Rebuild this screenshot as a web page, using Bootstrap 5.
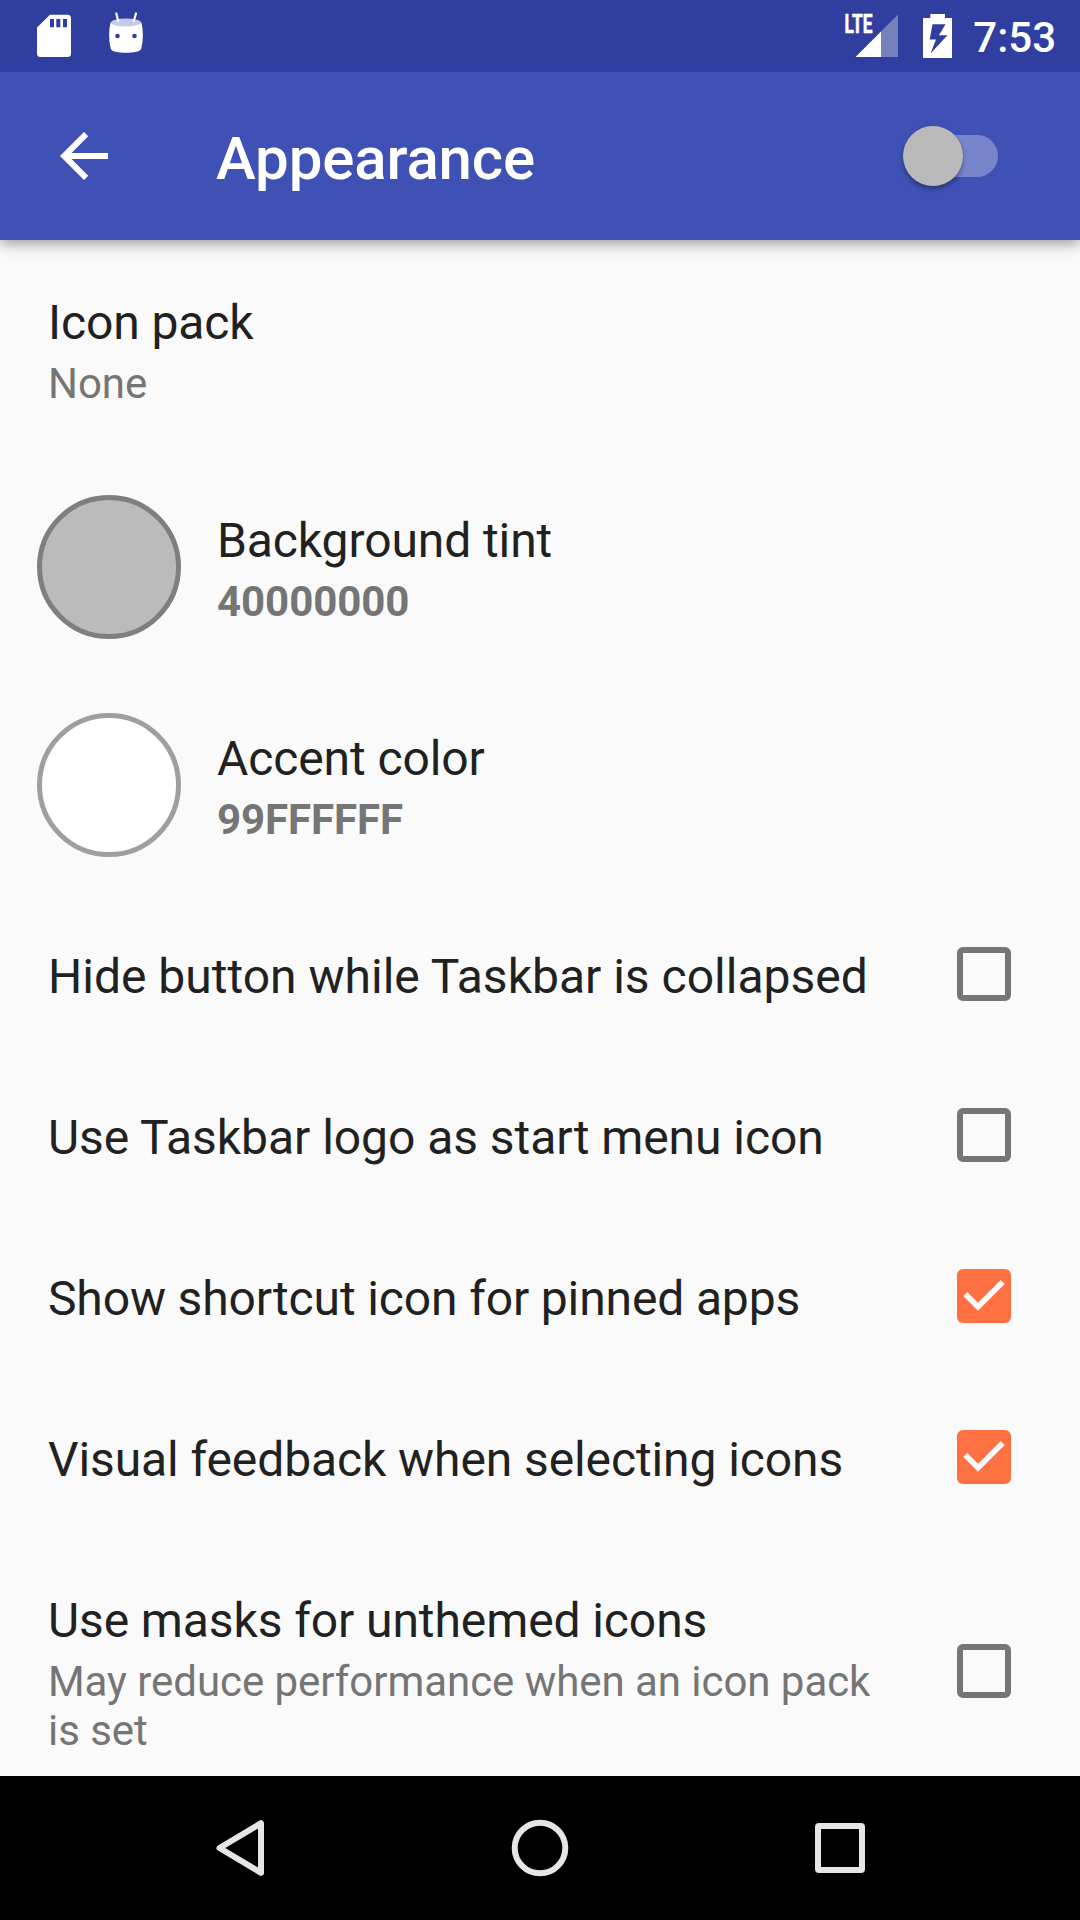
<!DOCTYPE html>
<html lang="en">
<head>
<meta charset="utf-8">
<meta name="viewport" content="width=device-width, initial-scale=1">
<title>Appearance</title>
<link href="https://cdn.jsdelivr.net/npm/bootstrap@5.3.0/dist/css/bootstrap.min.css" rel="stylesheet">
<style>
  body { font-family: Roboto, sans-serif; background: #fafafa; color: #212121; }
  .screen { width: 1080px; height: 1920px; }
  .status-bar { height: 72px; background: #303f9f; padding: 0 24px 0 37px; }
  .robot { margin-left: 38px; }
  .battery { margin-left: 25px; }
  .clock { font-size: 42px; line-height: 72px; font-weight: 500; padding-top: 3px; margin-left: 21px; }
  .app-bar { height: 168px; background: #3f51b5; padding: 0 82px 0 60px; box-shadow: 0 3px 14px rgba(0,0,0,.42); clip-path: inset(0 0 -30px 0); z-index: 2; }
  .app-title { font-size: 60px; line-height: 70px; font-weight: 500; margin: 6px 0 0 108px; letter-spacing: -.16px; }
  .toggle { width: 96px; height: 60px; }
  .toggle-track { width: 66px; height: 42px; border-radius: 0 21px 21px 0; background: #7985cb; }
  .toggle-thumb { width: 60px; height: 60px; background: #b9b9b9; left: .5px; top: 0; box-shadow: 0 3px 5px rgba(0,0,0,.35); }
  .pref { padding: 50px 69px 46px 48px; }
  .pref-tint { padding-left: 37px; height: 218px; }
  .pref-title { font-size: 48px; line-height: 65px; letter-spacing: -.1px; }
  .pref-sub { font-size: 42px; line-height: 49px; color: #757575; margin: 4px 0 4px; letter-spacing: -.05px; }
  .tight-0 { letter-spacing: 0; }
  .tight-1 { letter-spacing: -.05px; }
  .tight-2 { letter-spacing: -.14px; }
  .swatch { width: 144px; height: 144px; border: 5px solid; margin: -17px 36px -13px 0; }
  .swatch-grey { background: #bbb; border-color: #7f7f7f; }
  .swatch-white { background: #fff; border-color: #9f9f9f; }
  .box { margin-top: -5px; }
  .nav-keys { height: 144px; background: #000; }
</style>
</head>
<body>
<div class="screen d-flex flex-column overflow-hidden">
  <header class="status-bar d-flex align-items-center text-white flex-shrink-0">
    <svg width="34" height="72" viewBox="37 0 34 72"><path fill="#fff" fill-rule="evenodd" d="M50 14.700H67.500Q71 14.700 71 18.200V53.500Q71 57 67.500 57H40.500Q37 57 37 53.500V27.500ZM50 19V27.300H54V19ZM56.300 19V27.300H60.300V19ZM63 19V27.300H67V19Z"/></svg>
    <svg class="robot me-auto" width="34" height="72" viewBox="109 0 34 72"><path fill="#fff" d="M110.700 22C112 26.500 140 26.500 141.300 22Q144.500 34 141.300 48.500C140.500 54.300 111.500 54.300 110.700 48.500Q107.500 34 110.700 22Z"/><ellipse cx="126" cy="22.500" rx="15" ry="4" fill="#c5cae9"/><path d="M116.300 13.500 118.200 21M136 13.500 133.800 21" stroke="#fff" stroke-width="2.200" stroke-linecap="round"/><circle cx="117.500" cy="36" r="2.300" fill="#303f9f"/><circle cx="134.500" cy="36" r="2.300" fill="#303f9f"/></svg>
    <svg width="54" height="72" viewBox="844 0 54 72"><path fill="#7580bf" d="M881 31.500 898 14.500V57H881Z"/><path fill="#fff" d="M855.500 57 881 31.500V57Z"/><text x="844.500" y="33.300" textLength="28" lengthAdjust="spacingAndGlyphs" font-size="26" font-weight="700" fill="#fff" stroke="#fff" stroke-width=".6">LTE</text></svg>
    <svg class="battery" width="29" height="72" viewBox="923 0 29 72"><path fill="#fff" fill-rule="evenodd" d="M930.300 14H945V18H952V58H923V18H930.300ZM932.500 24.300 929.700 39.500H936L930.500 53.500 947.500 35.300H939L945.500 24.300Z"/></svg>
    <span class="clock">7:53</span>
  </header>

  <nav class="app-bar d-flex align-items-center text-white flex-shrink-0 position-relative">
    <svg width="48" height="48" viewBox="0 0 48 48"><path fill="#fff" d="M48 21H11.500L28.200 4.200 24 0 0 24 24 48 28.200 43.800 11.500 27H48Z"/></svg>
    <h1 class="app-title me-auto">Appearance</h1>
    <div class="toggle d-flex align-items-center justify-content-end position-relative">
      <div class="toggle-track"></div>
      <div class="toggle-thumb rounded-circle position-absolute"></div>
    </div>
  </nav>

  <main class="flex-grow-1 overflow-hidden">
    <section class="pref">
      <div class="pref-title">Icon pack</div>
      <div class="pref-sub">None</div>
    </section>
    <section class="pref pref-tint d-flex align-items-center">
      <div class="swatch swatch-grey rounded-circle"></div>
      <div>
        <div class="pref-title">Background tint</div>
        <div class="pref-sub fw-bold">40000000</div>
      </div>
    </section>
    <section class="pref pref-tint d-flex align-items-center">
      <div class="swatch swatch-white rounded-circle"></div>
      <div>
        <div class="pref-title">Accent color</div>
        <div class="pref-sub fw-bold">99FFFFFF</div>
      </div>
    </section>
    <section class="pref d-flex align-items-center justify-content-between">
      <div class="pref-title tight-0">Hide button while Taskbar is collapsed</div>
      <svg class="box" width="54" height="54"><rect x="3" y="3" width="48" height="48" rx="3" fill="none" stroke="#757575" stroke-width="6"/></svg>
    </section>
    <section class="pref d-flex align-items-center justify-content-between">
      <div class="pref-title tight-1">Use Taskbar logo as start menu icon</div>
      <svg class="box" width="54" height="54"><rect x="3" y="3" width="48" height="48" rx="3" fill="none" stroke="#757575" stroke-width="6"/></svg>
    </section>
    <section class="pref d-flex align-items-center justify-content-between">
      <div class="pref-title tight-2">Show shortcut icon for pinned apps</div>
      <svg class="box" width="54" height="54"><rect width="54" height="54" rx="6" fill="#ff7043"/><path fill="#fafafa" d="M6.300 27 10.200 23 21 33.700 43.700 11 47.700 15 21 41.800Z"/></svg>
    </section>
    <section class="pref d-flex align-items-center justify-content-between">
      <div class="pref-title">Visual feedback when selecting icons</div>
      <svg class="box" width="54" height="54"><rect width="54" height="54" rx="6" fill="#ff7043"/><path fill="#fafafa" d="M6.300 27 10.200 23 21 33.700 43.700 11 47.700 15 21 41.800Z"/></svg>
    </section>
    <section class="pref d-flex align-items-center justify-content-between">
      <div>
        <div class="pref-title">Use masks for unthemed icons</div>
        <div class="pref-sub">May reduce performance when an icon pack<br>is set</div>
      </div>
      <svg class="box" width="54" height="54"><rect x="3" y="3" width="48" height="48" rx="3" fill="none" stroke="#757575" stroke-width="6"/></svg>
    </section>
  </main>

  <footer class="nav-keys d-flex align-items-center justify-content-center flex-shrink-0">
    <svg width="660" height="60" viewBox="210 1818 660 60" fill="none" stroke="#e6e6e6" stroke-width="6" stroke-linejoin="round"><path d="M261 1823.200V1872.800L219.500 1848Z"/><circle cx="540" cy="1848" r="25.300"/><rect x="818" y="1826" width="44" height="44" rx="1"/></svg>
  </footer>
</div>
<script src="https://cdn.jsdelivr.net/npm/bootstrap@5.3.0/dist/js/bootstrap.bundle.min.js"></script>
</body>
</html>
